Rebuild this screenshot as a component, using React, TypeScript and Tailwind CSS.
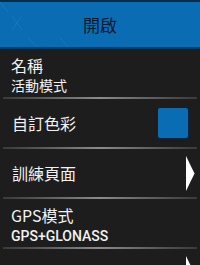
import type { ReactNode } from 'react';

const font = { fontFamily: '"Noto Sans CJK TC", "Noto Sans", sans-serif' };

function Separator() {
  return <div className="mx-[3px] h-[2px] bg-gradient-to-r from-[#3a3a3a] via-[#8c8c8c] to-[#3a3a3a]" />;
}

function Arrow() {
  return (
    <svg width="9" height="35" viewBox="0 0 9 35" className="shrink-0">
      <polygon points="0,0 8.5,17.5 0,35" fill="#ffffff" />
    </svg>
  );
}

function Row({ children, right }: { children: ReactNode; right?: ReactNode }) {
  return (
    <>
      <div className="flex h-[48px] items-center justify-between pl-[12px]">
        <div className="flex flex-col">{children}</div>
        {right}
      </div>
      <Separator />
    </>
  );
}

export default function App() {
  return (
    <div className="h-[265px] w-[200px] overflow-hidden bg-[#1d1d1d] text-[#f2f2f2]" style={font}>
      <div className="relative h-[49px] overflow-hidden border-t-2 border-b-2 border-t-[#0b2c45] border-b-[#083d63] bg-[#0a6db3]">
        <svg className="absolute inset-0" width="200" height="45" viewBox="0 0 200 45">
          <g stroke="#2a83c6" strokeWidth="1" opacity="0.45">
            <line x1="12" y1="14" x2="22" y2="28" />
            <line x1="22" y1="14" x2="12" y2="28" />
            <line x1="28" y1="36" x2="38" y2="46" />
            <line x1="0" y1="0" x2="8" y2="10" />
            <line x1="60" y1="36" x2="68" y2="45" />
          </g>
        </svg>
        <div className="relative flex h-full items-center justify-center text-[17px] text-[#0a1b2b]">開啟</div>
      </div>

      <div className="flex h-[48px] flex-col pl-[11px] pt-[5px]">
        <span className="text-[16px] leading-[22px]">名稱</span>
        <span className="text-[14px] leading-[18px]">活動模式</span>
      </div>
      <Separator />

      <Row right={<div className="mr-[11px] h-[32px] w-[32px] rounded-[3px] border border-[#0a2236] bg-[#0a6db3]" />}>
        <span className="text-[16px] leading-[20px]">自訂色彩</span>
      </Row>

      <Row right={<div className="mr-[5px]"><Arrow /></div>}>
        <span className="text-[16px] leading-[20px]">訓練頁面</span>
      </Row>

      <div className="flex h-[48px] flex-col pl-[11px] pt-[5px]">
        <span className="text-[16px] leading-[22px]">GPS模式</span>
        <span className="text-[14px] font-medium leading-[20px]" style={{ fontFamily: 'Roboto, sans-serif' }}>
          GPS+GLONASS
        </span>
      </div>
      <Separator />

      <div className="flex h-[48px] items-start justify-end pr-[5px] pt-[7px]">
        <Arrow />
      </div>
    </div>
  );
}
